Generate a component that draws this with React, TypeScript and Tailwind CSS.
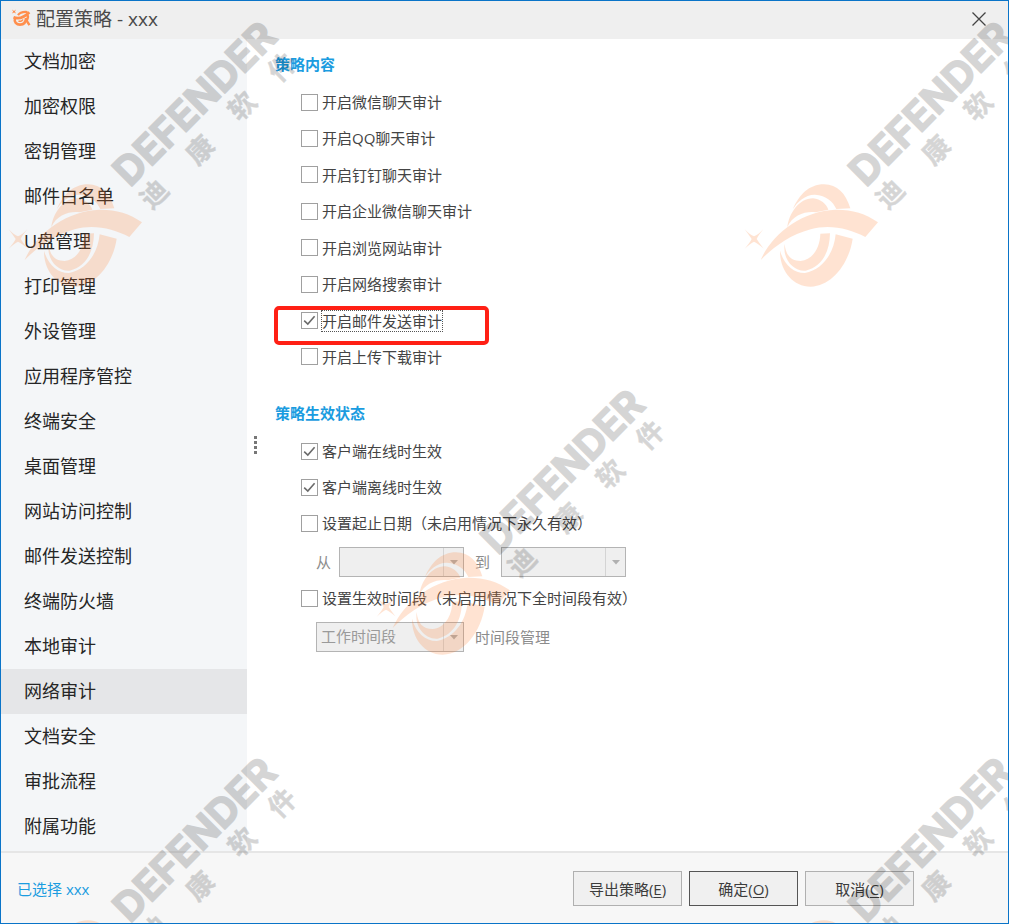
import { useState } from "react";

const MODULES = [
  "文档加密",
  "加密权限",
  "密钥管理",
  "邮件白名单",
  "U盘管理",
  "打印管理",
  "外设管理",
  "应用程序管控",
  "终端安全",
  "桌面管理",
  "网站访问控制",
  "邮件发送控制",
  "终端防火墙",
  "本地审计",
  "网络审计",
  "文档安全",
  "审批流程",
  "附属功能",
];

const AUDITS = [
  { label: "开启微信聊天审计" },
  { label: "开启QQ聊天审计" },
  { label: "开启钉钉聊天审计" },
  { label: "开启企业微信聊天审计" },
  { label: "开启浏览网站审计" },
  { label: "开启网络搜索审计" },
  { label: "开启邮件发送审计", checked: true, marked: true },
  { label: "开启上传下载审计" },
];

function CheckRow({
  label,
  checked = false,
  marked = false,
}: {
  label: string;
  checked?: boolean;
  marked?: boolean;
}) {
  return (
    <div className="relative flex h-9 items-center">
      {marked && (
        <span className="pointer-events-none absolute top-[3px] -left-[27px] h-[39px] w-[215px] rounded-[5px] border-4 border-[#ff2015]" />
      )}
      <label className="flex items-center gap-[3px]">
        <span className="grid size-[17px] place-items-center">
          <input
            type="checkbox"
            defaultChecked={checked}
            className="peer col-start-1 row-start-1 size-[17px] appearance-none border border-[#a0a0a0] bg-white"
          />
          <svg
            viewBox="0 0 17 17"
            className="pointer-events-none invisible col-start-1 row-start-1 size-[17px] fill-none stroke-[#6b6b6b] stroke-[1.6] peer-checked:visible"
          >
            <path d="M3.2 8.6 6.8 12 13.6 4.2" />
          </svg>
        </span>
        <span
          className={
            marked
              ? "border border-dotted border-[#555] leading-[20px]"
              : "border border-transparent leading-[20px]"
          }
        >
          {label}
        </span>
      </label>
    </div>
  );
}

function Dropdown({
  id,
  label,
  options,
  width,
}: {
  id: string;
  label?: string;
  options: string[];
  width: string;
}) {
  return (
    <span className={`grid h-[30px] ${width}`}>
      <select
        id={id}
        aria-label={label}
        disabled
        className="col-start-1 row-start-1 w-full appearance-none border border-[#b4b4b4] bg-[#efefef] pb-[2px] pl-1 text-[15px] text-[#9a9a9a] opacity-100"
      >
        {options.map((o) => (
          <option key={o}>{o}</option>
        ))}
      </select>
      <span className="pointer-events-none col-start-1 row-start-1 my-px mr-px flex w-5 items-center justify-center justify-self-end border-l border-[#d4d4d4]">
        <svg viewBox="0 0 8 5" className="h-[5px] w-2 fill-[#b0b0b0]">
          <path d="M0 0h8L4 4.6z" />
        </svg>
      </span>
    </span>
  );
}

function DialogIcon() {
  return (
    <svg viewBox="0 0 20 20" className="size-5 shrink-0" fill="none" stroke="#ff8f4d">
      <path
        d="M1 .6 3 2 5 .6 3.900 2.500 5 4.500 3 3.400 1 4.500 2.100 2.500z"
        fill="#ff8f4d"
        stroke="none"
      />
      <path d="M2.500 8.200C8 10.500 13 8.500 18.300 3.200" strokeWidth="2.8" />
      <path d="M7 6.200C8.500 3.800 12 2.600 16.500 3" strokeWidth="2.2" />
      <path d="M15.800 5.500C18.800 8 15.500 10.500 15.800 12L18.500 16.200" strokeWidth="2.4" />
      <path
        d="M4 9.500C2.800 13 5.500 15.600 9 15.600C12.500 15.600 15 13.500 15 9"
        strokeWidth="2.6"
      />
      <path d="M7.500 11.800C9 12.800 11 12.300 12 10.500" strokeWidth="1.500" />
    </svg>
  );
}

const TILES = [
  [0, 0],
  [736, 0],
  [368, 368],
  [0, 736],
  [736, 736],
];

const WATERMARK_CJK = [
  { ch: "迪", x: 154, y: 194 },
  { ch: "康", x: 200, y: 150 },
  { ch: "软", x: 242, y: 106 },
  { ch: "件", x: 282, y: 67 },
];

function Watermark() {
  return (
    <svg
      aria-hidden="true"
      className="pointer-events-none absolute inset-0 size-full overflow-hidden"
    >
      {TILES.map(([tx, ty]) => (
        <g key={`${tx}-${ty}`} transform={`translate(${tx - 1} ${ty - 1})`}>
          <g transform="translate(3 0) scale(0.3333)" fill="#ff7823" opacity="0.2">
            <path d="M17 688Q32 704 45 709Q58 704 73 688Q58 706 53 717Q60 728 73 745Q56 730 45 725Q35 730 17 746Q33 728 38 717Q30 705 17 688Z" />
            <path d="M162 627C180 585 210 553 255 553C295 553 320 580 334 625L292 627C282 605 262 586 228 584C200 583 175 605 162 627Z" />
            <path d="M145 682C150 640 180 595 222 595C245 597 262 612 268 629L230 637C200 633 160 645 145 682Z" />
            <path d="M65 780C100 700 190 632 290 629C335 628 380 640 417 667L379 711C330 685 270 672 215 688C150 705 100 745 65 780Z" />
            <path d="M137 732C140 765 155 783 185 783C220 780 243 745 244 701L273 700C272 755 250 800 200 812C165 815 130 780 137 732Z" />
            <path d="M123 752C135 795 165 820 198 819C250 810 285 760 290 703L341 716C330 790 280 858 215 860C160 860 122 810 123 752Z" />
          </g>
          <g
            fill="#000"
            stroke="#000"
            strokeLinejoin="round"
            opacity="0.16"
            className="font-bold"
          >
            <text
              transform="translate(130 188) rotate(-45)"
              fontSize="40"
              strokeWidth="1.500"
              fontFamily="Inter, sans-serif"
            >
              DEFENDER
            </text>
            {WATERMARK_CJK.map(({ ch, x, y }) => (
              <text
                key={ch}
                transform={`translate(${x} ${y}) rotate(-45)`}
                fontSize="27"
                strokeWidth="0.500"
                textAnchor="middle"
                dy="10"
                fontFamily="'Noto Sans CJK SC', sans-serif"
              >
                {ch}
              </text>
            ))}
          </g>
        </g>
      ))}
    </svg>
  );
}

function FooterButton({
  text,
  hotkey,
  primary = false,
}: {
  text: string;
  hotkey: string;
  primary?: boolean;
}) {
  return (
    <button
      type="button"
      className={`h-[35px] w-[109px] border bg-[#f0f0f0] text-[15px] text-[#3c3c3c] ${
        primary ? "border-[#555]" : "border-[#b0b0b0]"
      }`}
    >
      {text}(<span className="underline underline-offset-2">{hotkey}</span>)
    </button>
  );
}

export default function App() {
  const [active, setActive] = useState("网络审计");

  return (
    <div className="relative flex min-h-screen flex-col border border-[#0a74c8] bg-white font-['Open_Sans','Noto_Sans_CJK_SC',sans-serif] text-[15px] leading-[22px] text-[#444]">
      <header className="flex h-[38px] items-center bg-[#efefef] pr-[21px] pb-[2px] pl-[10px]">
        <DialogIcon />
        <h1 className="ml-[5px] flex-1 text-[19px] leading-[28px] text-[#4a4a4a]">
          配置策略 - xxx
        </h1>
        <button type="button" aria-label="关闭" className="grid size-4 place-items-center">
          <svg viewBox="0 0 14 14" className="size-[14px] fill-none stroke-[#444] stroke-[1.3]">
            <path d="M0.500 0.500 13.500 13.500M13.500 0.500 0.500 13.500" />
          </svg>
        </button>
      </header>

      <div className="flex flex-1">
        <nav className="w-[246px] shrink-0 bg-[#f4f6f8]">
          {MODULES.map((m) => (
            <button
              key={m}
              type="button"
              onClick={() => setActive(m)}
              className={`block h-[45px] w-full pb-[2px] pl-[23px] text-left text-[18px] leading-[26px] text-[#262626] ${
                m === active ? "bg-[#e5e6e8]" : ""
              }`}
            >
              {m}
            </button>
          ))}
        </nav>

        <div className="flex w-4 shrink-0 items-center justify-center" role="separator">
          <svg viewBox="0 0 3 18" className="h-[18px] w-[3px] fill-[#777]">
            <path d="M0 0h3v3h-3zM0 5h3v3h-3zM0 10h3v3h-3zM0 15h3v3h-3z" />
          </svg>
        </div>

        <main className="flex-1 pt-[13px] pl-3">
          <section>
            <h2 className="leading-6 font-bold text-[#1b9ce0]">策略内容</h2>
            <div className="mt-2 flex h-[291px] flex-col justify-between pl-[26px]">
              {AUDITS.map((a) => (
                <CheckRow key={a.label} {...a} />
              ))}
            </div>
          </section>

          <section className="mt-[26px]">
            <h2 className="leading-6 font-bold text-[#1b9ce0]">策略生效状态</h2>
            <div className="mt-2 pl-[26px]">
              <CheckRow label="客户端在线时生效" checked />
              <CheckRow label="客户端离线时生效" checked />
              <CheckRow label="设置起止日期（未启用情况下永久有效）" />
              <div className="flex items-center pt-[6px] pb-[3px] pl-[15px] text-[#8c8c8c]">
                <label htmlFor="date-from" className="mr-2">
                  从
                </label>
                <Dropdown id="date-from" options={[""]} width="w-[125px]" />
                <label htmlFor="date-to" className="mx-[11px]">
                  到
                </label>
                <Dropdown id="date-to" options={[""]} width="w-[125px]" />
              </div>
              <CheckRow label="设置生效时间段（未启用情况下全时间段有效）" />
              <div className="flex items-center pt-[6px] pb-[3px] pl-[15px]">
                <Dropdown
                  id="period"
                  label="生效时间段"
                  options={["工作时间段"]}
                  width="w-[148px]"
                />
                <button type="button" disabled className="ml-[11px] text-[#8c8c8c]">
                  时间段管理
                </button>
              </div>
            </div>
          </section>
        </main>
      </div>

      <footer className="flex h-[72px] items-center border-t-2 border-[#e6e6e6] bg-[#f7f7f7] pt-px pr-[94px] pl-4">
        <a href="#selected" className="flex-1 text-[#1b9ce0]">
          已选择 xxx
        </a>
        <div className="flex gap-[7px]">
          <FooterButton text="导出策略" hotkey="E" />
          <FooterButton text="确定" hotkey="O" primary />
          <FooterButton text="取消" hotkey="C" />
        </div>
      </footer>

      <Watermark />
    </div>
  );
}
